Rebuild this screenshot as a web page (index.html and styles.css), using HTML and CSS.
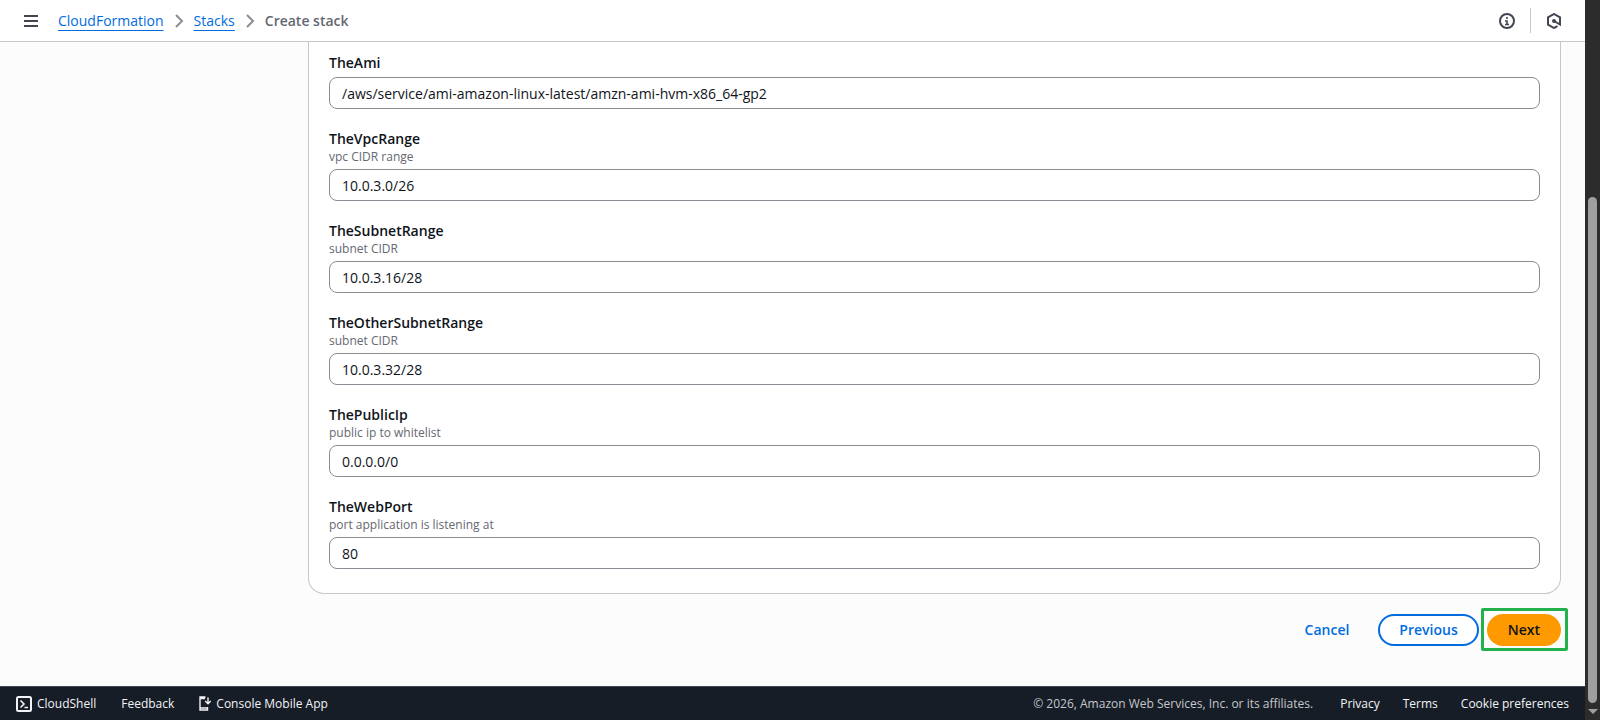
FILE: index.html
```html
<!DOCTYPE html>
<html lang="en">
<head>
<meta charset="utf-8">
<title>Create stack</title>
<link rel="stylesheet" href="styles.css">
</head>
<body>
<div class="page">
  <header class="topbar">
    <button class="icon-button" type="button" aria-label="Open navigation">
      <svg width="16" height="16" viewBox="0 0 16 16" stroke="#424650" stroke-width="2"><path d="M1 3h14M1 8h14M1 13h14"/></svg>
    </button>
    <nav class="crumbs" aria-label="Breadcrumbs">
      <a class="crumb-link" href="#">CloudFormation</a>
      <svg class="chevron" width="16" height="16" viewBox="0 0 16 16"><path d="M5 2l6 6-6 6"/></svg>
      <a class="crumb-link" href="#">Stacks</a>
      <svg class="chevron" width="16" height="16" viewBox="0 0 16 16"><path d="M5 2l6 6-6 6"/></svg>
      <span class="crumb-current">Create stack</span>
    </nav>
    <div class="tools">
      <button class="icon-button" type="button" aria-label="Info">
        <svg width="16" height="16" viewBox="0 0 16 16" fill="none" stroke="#424650" stroke-width="2"><circle cx="8" cy="8" r="7"/><path d="M8 4v2M6 8h2v3M6 11.5h4" stroke-width="1.6"/></svg>
      </button>
      <span class="divider"></span>
      <button class="icon-button" type="button" aria-label="Assistant">
        <svg width="16" height="16" viewBox="0 0 16 16" fill="none" stroke="#424650" stroke-width="2"><path d="M11.500 13.200L8 15 2 11.600V4.400L8 1l6 3.400V11.500L8 8"/><circle cx="8" cy="8" r="2" fill="#424650" stroke="none"/></svg>
      </button>
    </div>
  </header>

  <main class="content">
    <form class="form">
      <div class="panel">
        <div class="field">
          <label for="ami">TheAmi</label>
          <input id="ami" type="text" value="/aws/service/ami-amazon-linux-latest/amzn-ami-hvm-x86_64-gp2">
        </div>
        <div class="field">
          <label for="vpc">TheVpcRange</label>
          <p class="hint">vpc CIDR range</p>
          <input id="vpc" type="text" value="10.0.3.0/26">
        </div>
        <div class="field">
          <label for="subnet">TheSubnetRange</label>
          <p class="hint">subnet CIDR</p>
          <input id="subnet" type="text" value="10.0.3.16/28">
        </div>
        <div class="field">
          <label for="other">TheOtherSubnetRange</label>
          <p class="hint">subnet CIDR</p>
          <input id="other" type="text" value="10.0.3.32/28">
        </div>
        <div class="field">
          <label for="ip">ThePublicIp</label>
          <p class="hint">public ip to whitelist</p>
          <input id="ip" type="text" value="0.0.0.0/0">
        </div>
        <div class="field">
          <label for="port">TheWebPort</label>
          <p class="hint">port application is listening at</p>
          <input id="port" type="text" value="80">
        </div>
      </div>
      <div class="actions">
        <button class="btn btn-link" type="button">Cancel</button>
        <button class="btn btn-normal" type="button">Previous</button>
        <button class="btn btn-primary" type="button">Next</button>
      </div>
    </form>
  </main>

  <footer class="footer">
    <div class="foot-tools">
      <a class="foot-link" href="#">
        <svg width="16" height="16" viewBox="0 0 16 16" fill="none" stroke="#f3f3f7" stroke-width="2"><rect x="1" y="1" width="14" height="14" rx="1.500"/><path d="M4.500 4.500L8 8l-3.500 3.500M8.500 11.500H12" stroke-width="1.600"/></svg>
        CloudShell
      </a>
      <a class="foot-link" href="#">Feedback</a>
      <a class="foot-link" href="#">
        <svg width="12" height="16" viewBox="0 0 12 16" fill="none" stroke="#f3f3f7" stroke-width="1.400"><path d="M6.500 1H1v13h7.500v-3M1 2.500h5M1 12h7.500M9 1.500v6M6.200 5L9 7.700 11.700 5"/></svg>
        Console Mobile App
      </a>
    </div>
    <div class="foot-legal">
      <span class="copyright">© 2026, Amazon Web Services, Inc. or its affiliates.</span>
      <a class="foot-link" href="#">Privacy</a>
      <a class="foot-link" href="#">Terms</a>
      <a class="foot-link" href="#">Cookie preferences</a>
    </div>
  </footer>
</div>
<div class="scrollbar" aria-hidden="true">
  <div class="thumb"></div>
  <div class="arrow"></div>
</div>
</body>
</html>
```
FILE: styles.css
```css
* { box-sizing: border-box; }

body {
  margin: 0;
  height: 100vh;
  display: flex;
  overflow: hidden;
  font-family: "Open Sans", "Noto Sans", sans-serif;
  font-size: 14px;
  line-height: 20px;
  color: #0f141a;
}

.page {
  flex: 1;
  min-width: 0;
  display: flex;
  flex-direction: column;
  background: #fcfcfd;
}

.topbar {
  display: flex;
  align-items: center;
  height: 42px;
  padding: 0 23px;
  background: #fff;
  border-bottom: 1px solid #c6c6cd;
}

.icon-button {
  display: flex;
  padding: 0;
  border: 0;
  background: none;
}

.crumbs {
  display: flex;
  align-items: center;
  gap: 7px;
  margin-left: 19px;
}

.crumb-link {
  color: #006ce0;
  text-decoration: underline;
  text-underline-offset: 4px;
}

.chevron {
  fill: none;
  stroke: #8c8c94;
  stroke-width: 2;
}

.crumb-current {
  color: #656871;
  font-weight: 600;
}

.tools {
  display: flex;
  align-items: center;
  gap: 15px;
  margin-left: auto;
}

.divider {
  width: 1px;
  height: 25px;
  background: #c6c6cd;
}

.content {
  flex: 1;
  padding: 0 24px 0 308px;
}

.panel {
  display: flex;
  flex-direction: column;
  gap: 20px;
  padding: 11px 20px 24px;
  background: #fff;
  border: 1px solid #c6c6cd;
  border-top: 0;
  border-radius: 0 0 16px 16px;
}

.field {
  display: flex;
  flex-direction: column;
}

.field label { font-weight: 600; }

.hint {
  margin: 0;
  font-size: 12px;
  line-height: 16px;
  color: #656871;
}

.field input {
  height: 32px;
  margin-top: 4px;
  padding: 0 12px;
  border: 1px solid #8c8c94;
  border-radius: 8px;
  background: #fff;
  color: inherit;
  font: inherit;
}

.actions {
  display: flex;
  justify-content: flex-end;
  gap: 8px;
  margin-top: 20px;
}

.btn {
  height: 32px;
  padding: 0 19px;
  border: 2px solid transparent;
  border-radius: 16px;
  background: none;
  font: inherit;
  font-weight: 600;
}

.btn-link { color: #006ce0; }

.btn-normal {
  color: #006ce0;
  border-color: #006ce0;
  background: #fff;
}

.btn-primary {
  position: relative;
  color: #0f141a;
  border-color: #ff9900;
  background: #ff9900;
}

/* Rectangular highlight drawn around the primary action */
.btn-primary::after {
  content: "";
  position: absolute;
  inset: -8px -9px -7px -8px;
  border: 3px solid #22b14c;
  border-radius: 2px;
}

.footer {
  display: flex;
  align-items: center;
  justify-content: space-between;
  height: 34px;
  padding: 0 16px;
  background: #161d26;
  border-top: 1px solid #424650;
  font-size: 12px;
  line-height: 16px;
}

.foot-tools,
.foot-legal {
  display: flex;
  align-items: center;
}

.foot-tools { gap: 25px; }

.foot-legal { gap: 23px; }

.foot-link {
  display: flex;
  align-items: center;
  gap: 5px;
  color: #f3f3f7;
  text-decoration: none;
}

.copyright {
  margin-right: 4px;
  color: #c6c6cd;
}

.scrollbar {
  display: flex;
  flex-direction: column;
  align-items: center;
  justify-content: flex-end;
  gap: 6px;
  width: 15px;
  padding-bottom: 6px;
  background: #2c2c2c;
}

.thumb {
  width: 9px;
  height: 506px;
  border-radius: 5px;
  background: #9f9f9f;
}

.arrow {
  border: 5px solid transparent;
  border-top-color: #9f9f9f;
  border-bottom: 0;
}
```
